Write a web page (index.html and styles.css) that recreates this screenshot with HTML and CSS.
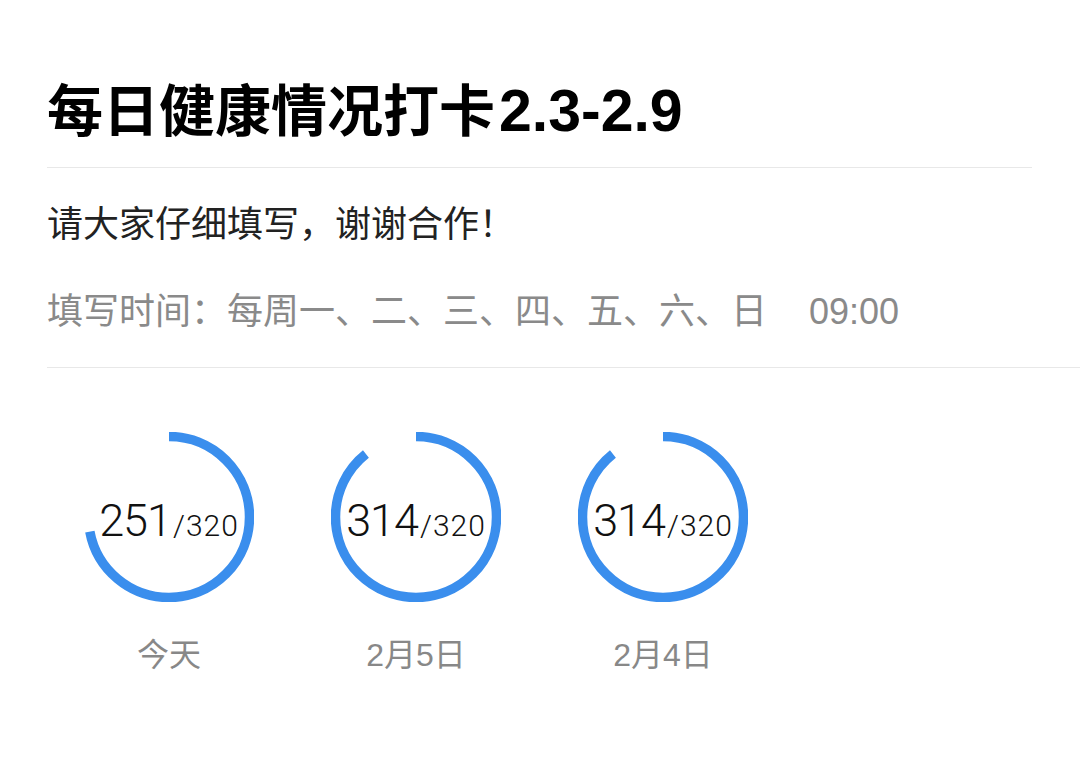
FILE: index.html
```html
<!DOCTYPE html>
<html lang="zh-CN">
<head>
    <meta charset="UTF-8">
    <title>每日健康情况打卡</title>
    <link rel="stylesheet" href="styles.css">
</head>
<body>
<div class="page">
    <h1 class="title">每日健康情况打卡<span class="range">2.3-2.9</span></h1>
    <div class="info">
        <p class="desc">请大家仔细填写，谢谢合作！</p>
        <p class="time">填写时间：每周一、二、三、四、五、六、日<span class="clock">09:00</span></p>
    </div>
    <ul class="stats">
        <li class="stat">
            <div class="ring">
                <svg width="170" height="170" viewBox="0 0 170 170">
                    <circle class="bar" cx="85" cy="85" r="80.5" stroke-dasharray="364 506"></circle>
                </svg>
                <div class="num"><span><b>251</b>/320</span></div>
            </div>
            <span class="day">今天</span>
        </li>
        <li class="stat">
            <div class="ring">
                <svg width="170" height="170" viewBox="0 0 170 170">
                    <circle class="bar" cx="85" cy="85" r="80.5" stroke-dasharray="451 506"></circle>
                </svg>
                <div class="num"><span><b>314</b>/320</span></div>
            </div>
            <span class="day">2月5日</span>
        </li>
        <li class="stat">
            <div class="ring">
                <svg width="170" height="170" viewBox="0 0 170 170">
                    <circle class="bar" cx="85" cy="85" r="80.5" stroke-dasharray="451 506"></circle>
                </svg>
                <div class="num"><span><b>314</b>/320</span></div>
            </div>
            <span class="day">2月4日</span>
        </li>
    </ul>
</div>
</body>
</html>
```

FILE: styles.css
```css
*{
    margin: 0;
    padding: 0;
}
html,body{
    background: #fff;
}
body{
    font-family: "Liberation Sans", "Noto Sans CJK SC", sans-serif;
    color: #1d1d1d;
}
.page{
    padding: 78px 0 0 47px;
}
.title{
    margin-right: 48px;
    padding-bottom: 22px;
    border-bottom: 1px solid #e8e8e8;
    font-size: 56px;
    line-height: 67px;
    font-weight: bold;
    color: #000;
}
.title .range{
    margin-left: 4px;
    font-size: 59px;
}
.info{
    padding: 32px 0 30px;
    border-bottom: 1px solid #e8e8e8;
}
.desc{
    font-size: 36px;
    line-height: 50px;
    color: #222;
}
.time{
    margin-top: 37px;
    font-size: 36px;
    line-height: 50px;
    color: #8a8a8a;
}
.time .clock{
    margin-left: 42px;
}
.stats{
    list-style: none;
    display: flex;
    gap: 77px;
    padding: 64px 0 0 37px;
}
.stat{
    display: flex;
    flex-direction: column;
    align-items: center;
    width: 170px;
}
.ring{
    position: relative;
    width: 170px;
    height: 170px;
}
.ring svg{
    display: block;
    transform: rotate(-90deg);
}
.ring .bar{
    fill: none;
    stroke: #3a8eed;
    stroke-width: 9.5;
}
.num{
    position: absolute;
    left: 0;
    top: 0;
    width: 100%;
    height: 100%;
    display: flex;
    align-items: center;
    justify-content: center;
    padding-top: 6px;
    box-sizing: border-box;
}
.num span{
    font-family: Roboto, "Liberation Sans", sans-serif;
    font-weight: 300;
    font-size: 30px;
    letter-spacing: 1px;
    color: #111;
    white-space: nowrap;
}
.num b{
    font-size: 45px;
    font-weight: 300;
    letter-spacing: -1px;
    margin-right: 2px;
}
.day{
    margin-top: 33px;
    font-size: 32px;
    line-height: 40px;
    color: #888;
}
```
